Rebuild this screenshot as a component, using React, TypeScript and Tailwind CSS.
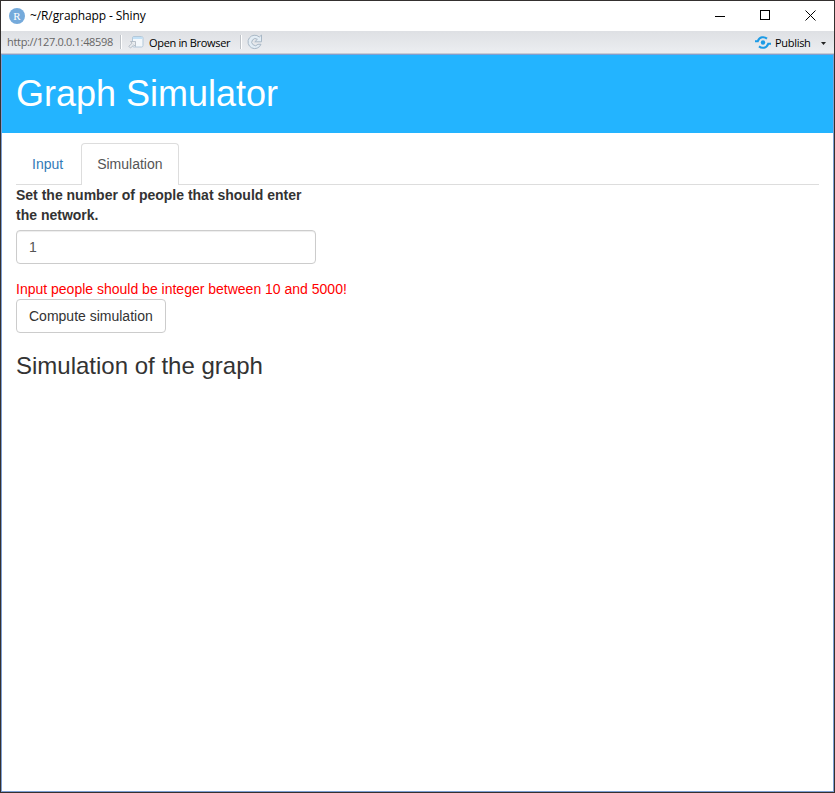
import React from "react";

function TitleBar() {
  return (
    <header className="flex h-[30px] shrink-0 items-center bg-white pl-2 font-['Open_Sans','Noto_Sans',sans-serif] text-black">
      <span className="flex size-4 items-center justify-center rounded-full bg-[#75aadb] font-['Liberation_Serif',serif] text-[11px] leading-none text-white">R</span>
      <h1 className="ml-[5px] text-[12px] tracking-[-0.1px]">~/R/graphapp - Shiny</h1>
      <div className="ml-auto flex">
        <button className="flex h-[30px] w-[45px] items-center justify-center pl-[2px]" aria-label="Minimize">
          <svg width="11" height="11" shapeRendering="crispEdges"><path d="M0 5.5h10" stroke="#000" /></svg>
        </button>
        <button className="flex h-[30px] w-[46px] items-center justify-center pb-px" aria-label="Maximize">
          <svg width="11" height="11" shapeRendering="crispEdges"><path d="M.5.5h9v9h-9z" fill="none" stroke="#000" /></svg>
        </button>
        <button className="flex h-[30px] w-[46px] items-center justify-center pb-[2px] pr-px" aria-label="Close">
          <svg width="11" height="11"><path d="M.5.5l10 10M10.5.5l-10 10" stroke="#000" /></svg>
        </button>
      </div>
    </header>
  );
}

function Divider() {
  return <span className="h-3.5 w-[2px] border-l border-[#bfc3c8] bg-white" />;
}

function Toolbar() {
  return (
    <div className="flex h-[23px] shrink-0 items-center border-b border-[#c7cbd2] bg-gradient-to-b from-[#dee0e4] to-[#eceef1] pl-[6px] font-['Open_Sans','Noto_Sans',sans-serif] text-[11px] text-black">
      <span className="w-[113px] whitespace-nowrap tracking-[-0.32px] text-[#666]">http://127.0.0.1:48598</span>
      <Divider />
      <svg className="ml-[6px]" width="16" height="14" viewBox="0 0 16 14">
        <rect x="4.500" y="1.500" width="10.500" height="10.500" rx="1.500" fill="#f4f8fb" stroke="#b3c8d9" />
        <path d="M5 3h9.500" stroke="#c2e0f6" strokeWidth="2" />
        <path d="M2.500 6.500H7.500V11.500L5.800 9.900L2.500 13L.8 11.300L4.100 8.200Z" fill="#e9ecef" stroke="#a9b3bc" strokeWidth=".8" />
      </svg>
      <span className="ml-[5px] w-[91px] whitespace-nowrap pt-[2px] tracking-[-0.33px]">Open in Browser</span>
      <Divider />
      <svg className="ml-[5px]" width="16" height="16" viewBox="0 0 16 16">
        <path d="M12.300 3L14.500 1V7.800H7.800L10.400 5.300A3.500 3.500 0 1 0 11 10.300H14A6.700 6.700 0 1 1 12.300 3Z" fill="#e3edf5" stroke="#a9b8c6" />
      </svg>
      <div className="ml-auto flex items-center pr-[8px] pt-[2px]">
        <svg width="17" height="14" viewBox="0 0 17 14" fill="none" stroke="#1c9be6" strokeWidth="2.100">
          <path d="M0 5.200H2.800C4.500 .8 9 .2 12 2.600M16 7.800H13.200C11.500 12.200 7 12.800 4 10.400" />
          <circle cx="8" cy="6.500" r="2.200" fill="#1c9be6" stroke="none" />
        </svg>
        <span className="ml-[3px] w-[46px] whitespace-nowrap tracking-[-0.3px]">Publish</span>
        <svg width="5" height="3"><path d="M0 0h5L2.500 3z" fill="#222" /></svg>
      </div>
    </div>
  );
}

export default function App() {
  return (
    <div className="flex h-[793px] w-[835px] flex-col border border-[#34302f] bg-white">
      <TitleBar />
      <Toolbar />
      <main className="flex-1 border border-[#7e9fd3] font-['Liberation_Sans',Arial,sans-serif] text-[14px] leading-5 text-[#333]">
        <div className="flex h-[78px] items-center bg-[#23b4ff] px-[14px]">
          <h2 className="text-[36px] leading-[40px] text-white">Graph Simulator</h2>
        </div>
        <div className="px-[14px] pt-[10px]">
          <nav className="flex h-[42px] border-b border-[#ddd]">
            <a className="mr-[2px] h-[42px] px-4 pt-[11px] text-[#337ab7]">Input</a>
            <a className="h-[42px] rounded-t border border-b-0 border-[#ddd] bg-white px-[15px] pt-[10px] text-[#555]">Simulation</a>
          </nav>
          <label className="block w-[300px] font-bold">Set the number of people that should enter the network.</label>
          <input
            className="mt-[5px] block h-[34px] w-[300px] rounded border border-[#ccc] px-3 text-[14px] text-[#555] shadow-[inset_0_1px_1px_rgba(0,0,0,0.075)]"
            defaultValue="1"
          />
          <p className="mt-[15px] text-[#f00]">Input people should be integer between 10 and 5000!</p>
          <button className="block h-[34px] rounded border border-[#ccc] px-3 text-[#333]">Compute simulation</button>
          <h3 className="mt-5 text-[24px] leading-[26px]">Simulation of the graph</h3>
        </div>
      </main>
    </div>
  );
}
